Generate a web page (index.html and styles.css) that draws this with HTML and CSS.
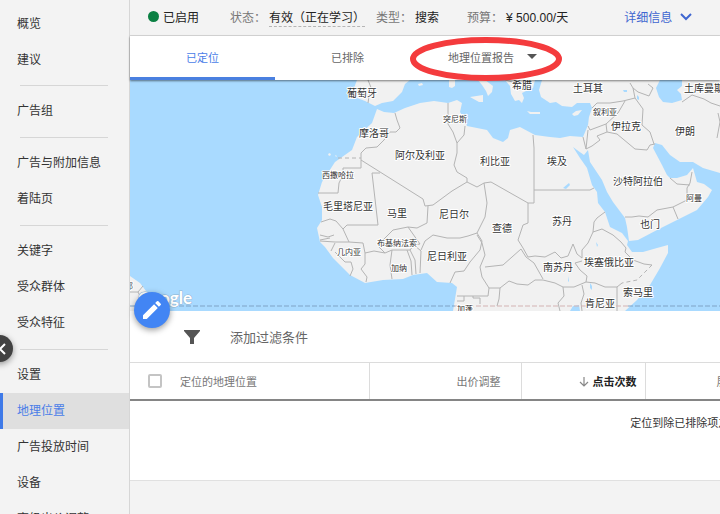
FILE: index.html
```html
<!DOCTYPE html>
<html lang="zh-CN">
<head>
    <meta charset="UTF-8">
    <meta name="viewport" content="width=device-width, initial-scale=1.0">
    <title>地理位置</title>
    <link rel="stylesheet" href="styles.css">
</head>
<body>
    <div class="app">
        <!-- Sidebar -->
        <nav class="sidebar">
            <a href="#">概览</a>
            <a href="#">建议</a>
            <hr>
            <a href="#">广告组</a>
            <hr>
            <a href="#">广告与附加信息</a>
            <a href="#">着陆页</a>
            <hr>
            <a href="#">关键字</a>
            <a href="#">受众群体</a>
            <a href="#">受众特征</a>
            <hr>
            <a href="#">设置</a>
            <a href="#" class="active">地理位置</a>
            <a href="#">广告投放时间</a>
            <a href="#">设备</a>
            <a href="#">高级出价调整</a>
            <button type="button" class="collapse-btn" aria-label="收起">
                <svg width="12" height="12" viewBox="0 0 12 12"><path d="M8 1 3 6l5 5" fill="none" stroke="#fff" stroke-width="2"/></svg>
            </button>
        </nav>

        <main class="main">
            <!-- Status bar -->
            <header class="status-bar">
                <span class="enabled">已启用</span>
                <span class="status"><span class="label">状态：</span><span class="dashed">有效（正在学习）</span></span>
                <span class="type"><span class="label">类型：</span>搜索</span>
                <span class="budget"><span class="label">预算：</span>¥ 500.00/天</span>
                <a href="#" class="details">详细信息
                    <svg width="12" height="8" viewBox="0 0 12 8"><path d="M1 1l5 5 5-5" fill="none" stroke="#3f66d0" stroke-width="2"/></svg>
                </a>
            </header>

            <!-- Tabs -->
            <div class="tabs">
                <button type="button" class="tab active">已定位</button>
                <button type="button" class="tab">已排除</button>
                <button type="button" class="tab report">地理位置报告<span class="caret"></span>
                    <svg class="circle-mark" width="154" height="46" viewBox="0 0 154 46"><ellipse cx="77" cy="23" rx="73" ry="19" fill="none" stroke="#f43b3d" stroke-width="6"/></svg>
                </button>
            </div>

            <!-- Map -->
            <div class="map">
                <svg class="map-svg" viewBox="130 80 590 231">
                    <rect x="130" y="80" width="590" height="231" fill="#a9daff"/>
                    <g class="land">
                        <!-- Africa, Arabia and western Asia -->
                        <path d="M377 109 384 112 394 113 405 108 420 103 434 101 448 103 457 100 462 103 460 112 464 118 467 126 477 128 487 130 493 138 503 142 508 138 510 130 520 127 535 135 550 137 560 138 570 136 583 137 588 125 589 117 592 108 590 103 577 103 572 107 562 106 556 102 550 103 541 97 539 90 542 80H720V173L703 168 693 162 680 162 670 155 662 145 655 143 653 148 662 165 667 175 670 178 677 178 687 175 693 168 695 175 697 182 704 184 712 190 708 197 697 210 677 220 657 230 638 240 629 241 627 227 625 218 613 202 607 192 602 180 590 162 588 150 584 155 577 150 573 147 580 158 587 168 592 185 597 192 598 203 605 212 610 227 622 233 628 241 627 245 632 252 643 252 657 248 668 245 668 253 660 268 650 285 637 300 625 311H453L457 287 452 283 437 282 427 273 413 275 403 279 383 280 365 283 350 275 333 258 325 247 320 242 317 228 322 220 322 207 318 195 322 182 335 162 352 150 357 137 372 123Z"/>
                        <!-- Iberia -->
                        <path d="M357 80 354 88 357 98 365 101 375 106 382 103 393 101 402 92 405 84 410 80Z"/>
                        <!-- Islands, Italy, Greece -->
                        <path d="M418 84l4-1 1 2-4 1zM449 80h6v6l-3 2-3-1zM485 80l8 6-1 6-4 4-2-5-4-6-4-5zM470 97l13-2 0 7-4 0zM505 80l5 6 1 8 4 7 4-1 3 3 2-5-2-5 6-3 5-2 2-8zM527 111l4 1 9 0 0 2-10 0zM572 114l4-3 6-1-4 5-4 1zM328 154l2-1 1 2-2 1zM335 155l2 1-1 1z"/>
                        <!-- South America -->
                        <path d="M130 276 140 283 146 291 152 296 160 311H130Z"/>
                    </g>
                    <path class="sea" d="M660 80 656 88 659 97 663 102 672 103 682 100 681 94 677 90 682 86 682 80ZM637 95l2 2 0 3-2-1zM623 90l4 0 0 2-3 0zM570 311l3-5 6-1 1 6zM590 283l2 3 0 4-2-2zM568 276l1 5-1 1zM596 242l2 3-1 2zM563 188l6-5 1 2-4 4z"/>
                    <g class="borders">
                        <path d="M368 80 372 90 369 96 368 103"/>
                        <path d="M395 113 397 120 400 128 396 132H390L384 140 377 147 366 148 361 153V168H343V175L339 183 338 193H318"/>
                        <path d="M361 160 423 199 425 206 433 205 452 191 467 182 467 178 457 172 454 165 457 153 457 143 453 132 448 124V103"/>
                        <path d="M457 143 464 135 465 126M467 182 477 187 484 183 491 182 528 203V223L523 225 518 240 523 248 528 257 535 256 545 257 555 252 561 258 568 256 573 244 577 254 582 258 582 250 588 243 593 232 594 222 597 218 605 212"/>
                        <path d="M533 135 534 148V203H528M534 190H590L594 188"/>
                        <path d="M380 173H372L378 225H347L343 229 336 221 330 219 321 222M343 229 349 242 335 242 320 241M320 235 328 237 334 235M320 240 330 238"/>
                        <path d="M428 206 427 223 417 228 408 227 393 230 382 241 378 246 385 253 374 251 365 253 363 243 349 242M385 253 392 250H410L414 245 420 244 408 227M392 250 390 265 392 279M407 250 411 261 412 275M410 250 415 260 416 274M414 245 421 251 420 273"/>
                        <path d="M365 253 365 264 361 269 367 277 366 282M335 243 331 251M335 252 345 262 351 262 353 269 350 276M421 250 425 241 433 235 447 238 460 238 468 236 477 233"/>
                        <path d="M484 183 487 203 485 217 477 233 482 241 480 250 470 262 464 271 455 272 450 283M477 235 482 243 485 255 480 267 482 277 489 288 488 296H457M485 267 503 265 512 257 521 249 526 257 534 263 543 279"/>
                        <path d="M489 288 500 288 509 281 517 284 528 285 535 280 543 280 555 283 563 287 574 287 586 282 587 276 580 270 575 263 582 261M500 288 499 299 497 306M457 301H464V296M473 296V298H480V304M563 287 564 296 558 303 560 311M582 285 584 294 581 303 582 311"/>
                        <path d="M593 232 602 229 613 235 621 242 626 248 625 252 633 260 644 264 652 265M586 282 595 283 605 287 617 287V311M617 287 622 283"/>
                        <path d="M625 217H632L639 216 648 217 657 210 673 207 687 200V188L690 183 692 172M673 207 678 219M670 178 677 184 690 185"/>
                        <path d="M583 137 586 149 592 146 600 140 597 136 607 132 617 134 635 149 647 150 650 145 655 144M607 132 606 124 590 130 588 126M588 130 586 149M606 124 618 113 625 101M592 108 597 103 610 103 623 101 635 98 643 109 642 125 650 132 654 144"/>
                        <path d="M635 98 633 88 638 92 649 96 653 88 648 84M633 88 630 83M682 102 692 95 704 99 711 103 720 106M718 113 720 122 717 138M505 80 520 84"/>
                        <path class="dash" d="M338 158H361M652 265 637 280 622 283"/>
                        <path d="M130 292H138L143 286M138 292 142 300"/>
                    </g>
                    <path class="equator" d="M130 306H455M628 306H720"/>
                    <path class="equator on-land" d="M455 306H628"/>
                    <g class="names">
                        <text x="362" y="97">葡萄牙</text>
                        <text x="374" y="137">摩洛哥</text>
                        <text x="420" y="159">阿尔及利亚</text>
                        <text x="495" y="165">利比亚</text>
                        <text x="522" y="89">希腊</text>
                        <text x="588" y="92">土耳其</text>
                        <text x="709" y="92">土库曼斯坦</text>
                        <text x="626" y="130">伊拉克</text>
                        <text x="685" y="135">伊朗</text>
                        <text x="557" y="165">埃及</text>
                        <text x="638" y="185">沙特阿拉伯</text>
                        <text x="348" y="210">毛里塔尼亚</text>
                        <text x="397" y="217">马里</text>
                        <text x="454" y="218">尼日尔</text>
                        <text x="502" y="232">查德</text>
                        <text x="562" y="225">苏丹</text>
                        <text x="650" y="228">也门</text>
                        <text x="447" y="260">尼日利亚</text>
                        <text x="558" y="271">南苏丹</text>
                        <text x="609" y="266">埃塞俄比亚</text>
                        <text x="638" y="296">索马里</text>
                        <text x="600" y="307">肯尼亚</text>
                        <g class="small">
                            <text x="455" y="122">突尼斯</text>
                            <text x="605" y="115">叙利亚</text>
                            <text x="338" y="178">西撒哈拉</text>
                            <text x="694" y="201">阿曼</text>
                            <text x="397" y="246">布基纳法索</text>
                            <text x="349" y="255">几内亚</text>
                            <text x="399" y="271">加纳</text>
                            <text x="465" y="312">加蓬</text>
                            <text x="121" y="289">圭亚那</text>
                        </g>
                    </g>
                    <text class="google" x="138" y="304">Google</text>
                </svg>
                <button type="button" class="edit-btn" aria-label="修改">
                    <svg width="24" height="24" viewBox="0 0 24 24"><path fill="#fff" d="M3 17.25V21h3.750L17.810 9.940l-3.750-3.750L3 17.250zM20.710 7.040a1 1 0 0 0 0-1.410l-2.340-2.340a1 1 0 0 0-1.410 0l-1.830 1.830 3.750 3.750 1.830-1.830z"/></svg>
                </button>
            </div>

            <!-- Filter -->
            <div class="filter-bar">
                <svg width="16" height="14" viewBox="0 0 16 14"><path fill="#555" d="M0 0h16v1l-6 7v6H6V8L0 1z"/></svg>
                <button type="button">添加过滤条件</button>
            </div>

            <!-- Location table -->
            <div class="table-wrap">
                <table>
                    <colgroup>
                        <col class="col-check">
                        <col class="col-place">
                        <col class="col-bid">
                        <col class="col-num">
                        <col class="col-num">
                        <col>
                    </colgroup>
                    <thead>
                        <tr>
                            <th class="check"><input type="checkbox" aria-label="全选"></th>
                            <th class="place">定位的地理位置</th>
                            <th class="bid">出价调整</th>
                            <th class="sorted"><svg width="10" height="12" viewBox="0 0 10 12"><path d="M5 1v9M1 6l4 4 4-4" fill="none" stroke="#888" stroke-width="1.200"/></svg>点击次数</th>
                            <th>展示次数</th>
                            <th></th>
                        </tr>
                    </thead>
                    <tbody>
                        <tr>
                            <td colspan="6">定位到除已排除项之外的所有地区</td>
                        </tr>
                    </tbody>
                </table>
            </div>
        </main>
    </div>
</body>
</html>
```
FILE: styles.css
```css
* {
    box-sizing: border-box;
}

body {
    margin: 0;
    font-family: "Liberation Sans", "Noto Sans CJK SC", sans-serif;
    font-size: 12px;
    color: #333;
    background: #f3f3f3;
}

button {
    font: inherit;
    color: inherit;
    background: none;
    border: 0;
    padding: 0;
    cursor: pointer;
}

a {
    color: inherit;
    text-decoration: none;
}

.app {
    display: flex;
    height: 100vh;
    overflow: hidden;
}

/* Sidebar */
.sidebar {
    position: relative;
    flex: 0 0 130px;
    padding-top: 6px;
    border-right: 1px solid #d6d6d6;
    background: #f3f3f3;
}

.sidebar a {
    display: block;
    height: 36px;
    line-height: 36px;
    padding-left: 17px;
}

.sidebar a.active {
    padding-left: 14px;
    border-left: 3px solid #3f7ae8;
    background: #dfdfdf;
    color: #4a7de8;
}

.sidebar hr {
    height: 1px;
    margin: 8px 21px 7px 20px;
    border: 0;
    background: #d6d6d6;
}

.sidebar hr:first-of-type {
    margin-top: 7px;
}

.collapse-btn {
    position: absolute;
    left: -14px;
    top: 335px;
    display: flex;
    align-items: center;
    justify-content: flex-end;
    width: 27px;
    height: 27px;
    padding-right: 4px;
    border-radius: 50%;
    background: #424242;
    box-shadow: 0 2px 6px rgba(0, 0, 0, 0.4);
}

.main {
    flex: 1;
    min-width: 0;
}

/* Status bar */
.status-bar {
    display: flex;
    align-items: center;
    height: 36px;
    padding-left: 18px;
    padding-bottom: 2px;
    border-bottom: 1px solid #d8d8d8;
    white-space: nowrap;
    color: #222;
}

.label {
    margin-right: 3px;
    color: #777;
}

.enabled {
    display: flex;
    align-items: center;
    gap: 4px;
    margin-right: 31px;
}

.enabled::before {
    content: "";
    width: 11px;
    height: 11px;
    border-radius: 50%;
    background: #0b8043;
}

.dashed {
    padding-bottom: 1px;
    border-bottom: 1px dashed #b5b5b5;
}

.status {
    margin-right: 11px;
}

.type {
    margin-right: 28px;
}

.budget {
    margin-right: 56px;
}

.details {
    display: flex;
    align-items: center;
    gap: 8px;
    color: #3f66d0;
}

/* Tabs */
.tabs {
    position: relative;
    z-index: 1;
    display: flex;
    height: 44px;
    background: #fff;
    box-shadow: 0 1px 2px rgba(0, 0, 0, 0.5);
}

.tab {
    width: 145px;
    font-size: 11px;
    color: #666;
    border-bottom: 3px solid transparent;
}

.tab.active {
    color: #4a7de8;
    border-bottom-color: #4a80e0;
}

.tab.report {
    position: relative;
    display: flex;
    align-items: center;
    justify-content: center;
}

.caret {
    margin-left: 13px;
    border: 5px solid transparent;
    border-top-color: #555;
    border-bottom: 0;
}

.circle-mark {
    position: absolute;
    left: -11px;
    top: 0;
}

/* Map */
.map {
    position: relative;
}

.map-svg {
    display: block;
    width: 100%;
}

.land {
    fill: #f1f1f1;
}

.sea {
    fill: #a9daff;
}

.borders {
    fill: none;
    stroke: #b4b4b4;
    stroke-width: 1;
    stroke-linejoin: round;
}

.dash {
    stroke-dasharray: 4 3;
}

.equator {
    fill: none;
    stroke: #7fa3c6;
    stroke-dasharray: 5 2;
}

.on-land {
    stroke: #d3b3b3;
}

.names {
    font-size: 10px;
    fill: #333;
    stroke: #fff;
    stroke-width: 2;
    stroke-linejoin: round;
    paint-order: stroke;
    text-anchor: middle;
}

.small {
    font-size: 8px;
}

.google {
    font-family: Lato, sans-serif;
    font-size: 17px;
    font-weight: bold;
    fill: #fff;
    stroke: #8fb3cf;
    stroke-width: 1;
    paint-order: stroke;
}

.edit-btn {
    position: absolute;
    left: 4px;
    bottom: -17px;
    display: flex;
    align-items: center;
    justify-content: center;
    width: 36px;
    height: 36px;
    border-radius: 50%;
    background: #4285f4;
    box-shadow: 0 2px 6px rgba(0, 0, 0, 0.4);
}

/* Filter */
.filter-bar {
    display: flex;
    align-items: center;
    gap: 30px;
    height: 51px;
    padding-left: 54px;
    background: #fff;
    font-size: 13px;
    color: #666;
}

/* Table */
.table-wrap {
    overflow: hidden;
    background: #fff;
    border-bottom: 1px solid #e0e0e0;
}

table {
    width: 1166px;
    table-layout: fixed;
    border-collapse: collapse;
    font-size: 11px;
}

.col-check {
    width: 50px;
}

.col-place {
    width: 189px;
}

.col-bid {
    width: 152px;
}

.col-num {
    width: 124px;
}

th {
    height: 37px;
    padding: 0 8px;
    border-top: 1px solid #dcdcdc;
    border-right: 1px solid #dcdcdc;
    border-bottom: 2px solid #858585;
    text-align: right;
    font-weight: normal;
    color: #777;
}

th.check {
    padding: 0 0 0 18px;
    border-right: 0;
    text-align: left;
}

th.place {
    padding: 0;
    text-align: left;
}

th.bid {
    padding-right: 20px;
}

th.sorted {
    font-weight: bold;
    color: #222;
}

th.sorted svg {
    margin-right: 4px;
    vertical-align: -2px;
}

th input {
    appearance: none;
    display: block;
    width: 14px;
    height: 14px;
    margin: 0;
    border: 2px solid #c4c4c4;
    border-radius: 2px;
}

td {
    height: 80px;
    padding: 13px 0 0;
    text-align: center;
    vertical-align: top;
}
```
